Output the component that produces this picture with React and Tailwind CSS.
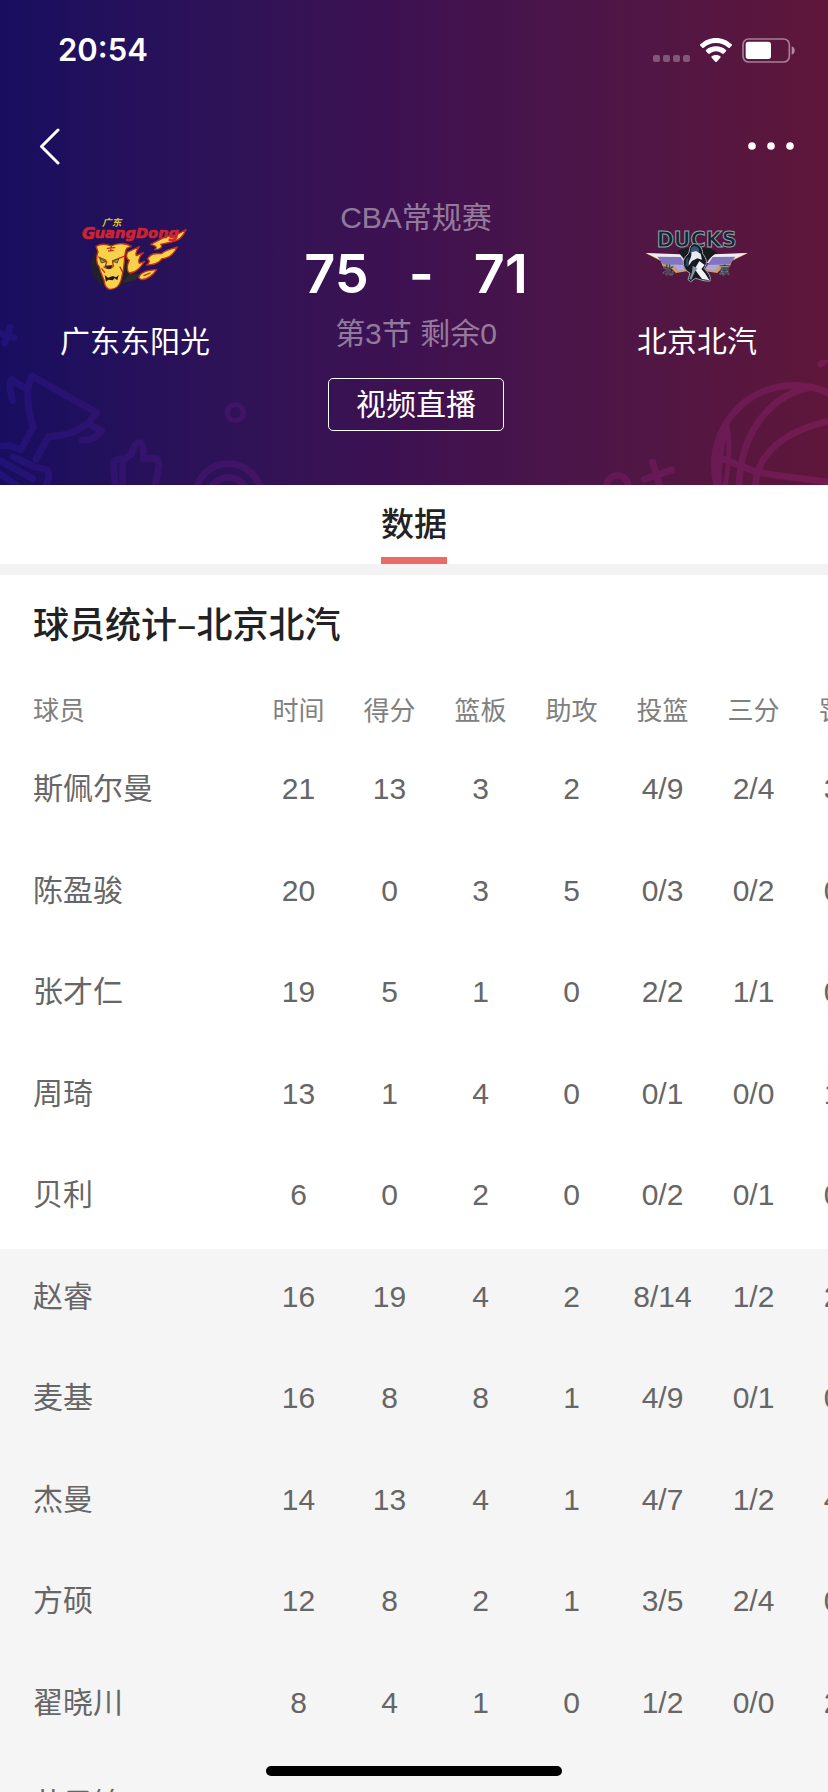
const columns = ["时间", "得分", "篮板", "助攻", "投篮", "三分", "罚球"];

const players = [
  { name: "斯佩尔曼", starter: true, stats: ["21", "13", "3", "2", "4/9", "2/4", "3/3"] },
  { name: "陈盈骏", starter: true, stats: ["20", "0", "3", "5", "0/3", "0/2", "0/0"] },
  { name: "张才仁", starter: true, stats: ["19", "5", "1", "0", "2/2", "1/1", "0/0"] },
  { name: "周琦", starter: true, stats: ["13", "1", "4", "0", "0/1", "0/0", "1/2"] },
  { name: "贝利", starter: true, stats: ["6", "0", "2", "0", "0/2", "0/1", "0/0"] },
  { name: "赵睿", stats: ["16", "19", "4", "2", "8/14", "1/2", "2/2"] },
  { name: "麦基", stats: ["16", "8", "8", "1", "4/9", "0/1", "0/0"] },
  { name: "杰曼", stats: ["14", "13", "4", "1", "4/7", "1/2", "4/4"] },
  { name: "方硕", stats: ["12", "8", "2", "1", "3/5", "2/4", "0/0"] },
  { name: "翟晓川", stats: ["8", "4", "1", "0", "1/2", "0/0", "2/2"] },
  { name: "范子铭", stats: ["4", "0", "1", "0", "0/1", "0/0", "0/0"] },
];

function StatusIcons() {
  return (
    <div className="flex items-center gap-[10px]">
      <svg width="37" height="25" viewBox="0 0 37 25" fill="#fff" fillOpacity="0.28" aria-hidden="true">
        {[0, 10, 20, 30].map((x) => (
          <rect key={x} x={x} y="17" width="7" height="7" rx="2" />
        ))}
      </svg>
      <svg width="32" height="25" viewBox="0 0 96 75" fill="#fff" aria-hidden="true">
        <path d="M48 0C66 0 83 7 95 19Q97 21 95 23L89 29Q87 31 85 29C75 20 62 15 48 15S21 20 11 29Q9 31 7 29L1 23Q-1 21 1 19C13 7 30 0 48 0Z" />
        <path d="M48 25C60 25 70 29 78 36Q80 38 78 40L71 47Q69 48 67 47C62 43 55 40 48 40S34 43 29 47Q27 48 25 47L18 40Q16 38 18 36C26 29 36 25 48 25Z" />
        <path d="M48 51C54 51 58 53 61 55Q63 57 61 59L50 71Q48 73 46 71L35 59Q33 57 35 55C38 53 42 51 48 51Z" />
      </svg>
      <svg width="53" height="25" viewBox="0 0 159 75" aria-hidden="true">
        <rect x="3" y="3" width="139" height="69" rx="17" fill="none" stroke="#fff" strokeOpacity="0.45" strokeWidth="5" />
        <rect x="11" y="11" width="76" height="52" rx="8" fill="#fff" />
        <path d="M149 25C155 27 158 31 158 37.500S155 48 149 50Z" fill="#fff" fillOpacity="0.5" />
      </svg>
    </div>
  );
}

function GuangdongLogo() {
  return (
    <svg className="overflow-visible" width="110" height="75" viewBox="60 50 330 225" role="img" aria-label="广东">
      <circle cx="157" cy="196" r="65" fill="#22202c" />
      <path d="M186 250L228 238L240 222L210 218Z" fill="#2d2a2c" />
      <g fill="#f9d24a" stroke="#c2301c" strokeWidth="4" strokeLinejoin="round">
        <path d="M108 138C125 128 140 131 154 137C170 128 195 126 214 138L200 144C194 155 194 170 193 183C192 205 188 222 183 240C178 258 164 267 150 267C138 266 134 256 132 240C128 228 120 215 118 200C108 190 108 170 114 155Z" />
        <path d="M203 155L238 139C230 150 225 158 229 166L250 157C236 170 234 180 238 189L254 183C240 202 228 218 208 218C198 210 202 190 208 180C198 176 198 164 203 155Z" />
        <path d="M272 132L318 108L348 104L378 88C368 112 352 122 335 125L302 132C310 140 300 148 284 148C294 140 286 136 272 132Z" />
        <path d="M262 176C272 160 284 158 304 160C318 148 332 146 352 140C340 164 326 174 306 175C296 190 280 194 260 194C270 186 270 180 262 176Z" />
        <path d="M236 232C242 214 262 210 290 208C280 224 262 238 244 238Z" />
      </g>
      <g fill="none" stroke="#b8321d" strokeWidth="4" strokeLinecap="round">
        <path d="M154 136L152 150M142 144L164 142M146 152L160 150" />
        <path d="M116 170L138 180M192 168L162 180M132 200Q146 210 158 200M140 184L136 198M158 184L160 198" />
        <path d="M180 200L188 216M125 205L134 216M252 226L270 218" />
      </g>
      <path d="M119 174L138 184L124 188ZM156 182L176 176L172 188Z" fill="#8fa531" stroke="#2d2a18" strokeWidth="2" />
      <path d="M134 196L158 194L152 206L142 206Z" fill="#402018" />
      <path d="M134 224L144 232L158 227L168 231L176 224L172 240L164 234L158 240L145 238L138 244Z" fill="#26161c" />
      <text x="126" y="77" fontSize="29" fontStyle="italic" fontWeight="700" fill="#d9c23b" fontFamily="'Noto Sans CJK SC', sans-serif">
        广东
      </text>
      <text x="66" y="115" fontSize="49" fontStyle="italic" fontWeight="700" fill="#cf2430" stroke="#cf2430" strokeWidth="2" fontFamily="'DejaVu Sans', sans-serif">
        G
      </text>
      <text x="104" y="114" fontSize="44" fontStyle="italic" fontWeight="700" fill="#cf2430" stroke="#cf2430" strokeWidth="2" fontFamily="'DejaVu Sans', sans-serif">
        uangDong
      </text>
    </svg>
  );
}

function DucksLogo() {
  return (
    <svg className="overflow-visible" width="110" height="75" viewBox="66 50 330 225" role="img" aria-label="Ducks">
      <path d="M76 158L182 166L204 212L168 218L152 202L128 198L122 182Z" fill="#d7a04c" />
      <path d="M384 158L280 166L252 212L292 218L306 202L330 198L336 182Z" fill="#d7a04c" />
      <path d="M78 158L180 162L200 188L124 180Z" fill="#f0edf2" />
      <path d="M382 158L280 162L260 188L334 180Z" fill="#f0edf2" />
      <path d="M112 169L182 170L204 206L176 212L160 196L130 192Z" fill="#8375bd" />
      <path d="M346 169L278 170L254 206L284 212L298 196L330 192Z" fill="#8375bd" />
      <path d="M130 192L160 196L176 212L202 206L196 194Z" fill="#b1a7dd" />
      <path d="M330 192L298 196L284 212L256 206L264 194Z" fill="#b1a7dd" />
      <path d="M172 152L196 144L268 144L292 156L262 178L198 178Z" fill="#171b1e" />
      <text x="230" y="139" textAnchor="middle" fontSize="62" fontWeight="700" fill="#17232e" stroke="#8ba3ab" strokeWidth="3" fontFamily="'DejaVu Sans', sans-serif">
        DUCKS
      </text>
      <path d="M222 130C236 130 248 142 248 160C262 176 262 192 252 204C264 216 274 228 270 242C250 244 238 236 226 234L212 244L204 238L210 218C194 210 186 194 192 176C198 164 206 164 208 152C208 140 214 132 222 130Z" fill="#151a22" stroke="#9aaab0" strokeWidth="3" />
      <path d="M222 137C236 138 240 148 236 158L224 152L212 158C212 146 214 140 222 137Z" fill="#33577a" />
      <path d="M214 156L228 152L242 160L246 178L232 174L216 182L206 196C204 182 216 174 214 156Z" fill="#e6e9ef" />
      <path d="M238 182L254 194L244 206L256 220L268 240L246 236L234 220L224 206Z" fill="#f2f3f6" />
      <path d="M218 196L232 204L224 216L214 238L208 236L216 216Z" fill="#8794a0" />
      <path d="M198 176L206 170L204 200L196 196Z" fill="#28465f" />
      <g fontSize="33" fontWeight="700" fill="#24303c" stroke="#94a9b8" strokeWidth="1" fontFamily="'Noto Sans CJK SC', sans-serif">
        <text x="128" y="220">北</text>
        <text x="297" y="220">京</text>
      </g>
    </svg>
  );
}

function HeaderArt() {
  return (
    <>
      <svg className="absolute bottom-0 left-0" width="280" height="175" viewBox="0 0 840 525" fill="none" strokeWidth="20" strokeLinecap="round" strokeLinejoin="round" stroke="url(#artLeft)" aria-hidden="true">
        <defs>
          <linearGradient id="artLeft" gradientUnits="userSpaceOnUse" x1="0" y1="0" x2="840" y2="0">
            <stop stopColor="#211276" />
            <stop offset="1" stopColor="#471463" />
          </linearGradient>
        </defs>
        <path d="M-5 68L42 82M30 52L14 100" />
        <path d="M95 198L290 308L264 340C228 368 190 378 145 380L108 448" />
        <path d="M95 198C75 240 84 310 100 350L62 420L30 406L0 408" />
        <path d="M78 236L35 208C25 225 32 250 38 272M264 342L305 362C290 382 268 392 246 391" />
        <path d="M40 440L105 472L138 478Q148 484 146 500L138 530M0 452L98 506M0 492L52 528" />
        <path d="M346 530L340 460Q342 446 375 446L394 432C402 416 402 398 418 398C434 400 430 425 430 446L462 446Q480 448 477 465L465 530M368 450V530" />
        <circle cx="706" cy="308" r="24" strokeWidth="15" />
        <circle cx="685" cy="560" r="99" />
        <circle cx="685" cy="560" r="58" />
      </svg>
      <svg className="absolute right-0 bottom-0" width="248" height="125" viewBox="0 0 744 375" fill="none" strokeWidth="20" strokeLinecap="round" strokeLinejoin="round" stroke="url(#artRight)" aria-hidden="true">
        <defs>
          <linearGradient id="artRight" gradientUnits="userSpaceOnUse" x1="0" y1="0" x2="744" y2="0">
            <stop stopColor="#611857" />
            <stop offset="1" stopColor="#731c50" />
          </linearGradient>
        </defs>
        <circle cx="642" cy="315" r="239" />
        <path d="M690 82C560 110 480 230 477 380M750 182C620 212 530 275 526 380" />
        <path d="M412 290L525 335C600 350 680 358 750 366" />
        <path d="M440 186C452 250 446 330 434 380M440 200C424 260 416 330 418 380" strokeWidth="14" />
        <path d="M738 -4L722 12" />
        <circle cx="112" cy="378" r="32" />
        <path d="M218 306L240 380M192 358L275 330" />
      </svg>
    </>
  );
}

function Team({ logo, name }) {
  return (
    <div className="flex w-[150px] flex-col items-center pt-[13px]">
      {logo}
      <p className="mt-[30px] text-[30px] leading-10 whitespace-nowrap">{name}</p>
    </div>
  );
}

function StatsTable() {
  return (
    <div className="overflow-x-hidden">
      <table className="w-[890px] table-fixed border-collapse text-center text-[#666]">
        <thead>
          <tr className="h-[68px] text-[26px] leading-10 text-[#808080]">
            <th className="w-[253px] pt-2 pl-[33px] text-left font-normal">球员</th>
            {columns.map((label) => (
              <th key={label} className="w-[91px] pt-2 font-normal">
                {label}
              </th>
            ))}
          </tr>
        </thead>
        <tbody>
          {players.map((player) => (
            <tr
              key={player.name}
              className={`odd:h-[102px] even:h-[101px] text-[30px] leading-10 ${player.starter ? "bg-white" : "bg-[#f5f5f5]"}`}
            >
              <th className="pb-[6px] pl-[33px] text-left font-normal">{player.name}</th>
              {player.stats.map((value, i) => (
                <td key={columns[i]} className="pb-[6px]">
                  {value}
                </td>
              ))}
            </tr>
          ))}
        </tbody>
      </table>
    </div>
  );
}

export default function App() {
  return (
    <div className="relative h-screen overflow-hidden bg-white font-['Liberation_Sans','Noto_Sans_CJK_SC',sans-serif]">
      <header className="relative overflow-hidden bg-linear-to-r from-[#180d60] via-[#3f1150] to-[#5f163a] pb-[54px] text-white">
        <HeaderArt />

        {/* Status bar */}
        <div className="relative flex h-[88px] items-center justify-between pt-3 pr-[33px] pl-[58px]">
          <span className="font-[Inter,sans-serif] text-[31px] font-semibold">20:54</span>
          <StatusIcons />
        </div>

        {/* Navigation */}
        <div className="relative flex h-[116px] items-center justify-between pr-[34px] pl-[39px]">
          <button type="button" aria-label="返回">
            <svg width="21" height="37" viewBox="0 0 21 37" fill="none" stroke="#fff" strokeWidth="3" strokeLinecap="round" strokeLinejoin="round">
              <path d="M19 2L2.500 18.500L19 35" />
            </svg>
          </button>
          <button type="button" aria-label="更多">
            <svg width="46" height="8" viewBox="0 0 46 8" fill="#fff">
              <circle cx="4" cy="4" r="3.800" />
              <circle cx="23" cy="4" r="3.800" />
              <circle cx="42" cy="4" r="3.800" />
            </svg>
          </button>
        </div>

        {/* Score board */}
        <div className="relative flex justify-between pr-14 pl-[60px]">
          <Team logo={<GuangdongLogo />} name="广东东阳光" />
          <div className="flex flex-col items-center">
            <p className="text-[30px] leading-7 text-white/45">CBA常规赛</p>
            <p className="flex items-center gap-10 font-[Inter,sans-serif] text-[54px] leading-[84px] font-semibold">
              <span>75</span>
              <span>-</span>
              <span>71</span>
            </p>
            <p className="text-[30px] leading-9 text-white/45">第3节 剩余0</p>
            <button type="button" className="mt-[26px] h-[53px] w-[176px] rounded-[5px] border border-white text-[30px] leading-10">
              视频直播
            </button>
          </div>
          <Team logo={<DucksLogo />} name="北京北汽" />
        </div>
      </header>

      <nav className="flex justify-center border-b-[11px] border-[#f3f3f3]">
        <button type="button" className="border-b-[7px] border-[#eb6966] pt-4 pb-2 text-[33px] leading-[48px] font-medium text-[#222]">
          数据
        </button>
      </nav>

      <main>
        <h1 className="pt-[23px] pb-[27px] pl-[33px] font-['Noto_Sans_CJK_SC',sans-serif] text-[36px] leading-[48px] font-medium text-[#222]">
          球员统计–北京北汽
        </h1>
        <StatsTable />
      </main>

      <div className="absolute bottom-4 left-1/2 h-[10px] w-[296px] -translate-x-1/2 rounded-full bg-black" />
    </div>
  );
}
